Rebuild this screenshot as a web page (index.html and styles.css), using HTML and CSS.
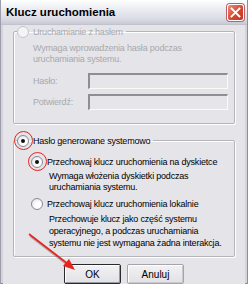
FILE: index.html
```html
<!DOCTYPE html>
<html lang="pl">
<head>
    <meta charset="UTF-8">
    <title>Klucz uruchomienia</title>
    <link rel="stylesheet" href="styles.css">
</head>
<body>
    <div class="window">
        <div class="titlebar">
            <span class="title">Klucz uruchomienia</span>
            <span class="close">
                <svg width="11" height="11" viewBox="0 0 11 11">
                    <path d="M1.5 1.5 L9.5 9.5 M9.5 1.5 L1.5 9.5" stroke="#fff" stroke-width="1.8" stroke-linecap="square"/>
                </svg>
            </span>
        </div>
        <div class="content">
            <fieldset class="group disabled">
                <legend><span class="radio"></span>Uruchamianie z hasłem</legend>
                <p class="desc">Wymaga wprowadzenia hasła podczas<br>uruchamiania systemu.</p>
                <div class="field">
                    <label>Hasło:</label>
                    <span class="input"></span>
                </div>
                <div class="field">
                    <label>Potwierdź:</label>
                    <span class="input"></span>
                </div>
            </fieldset>

            <fieldset class="group">
                <legend><span class="radio checked marked"></span>Hasło generowane systemowo</legend>
                <div class="option"><span class="radio checked marked"></span>Przechowaj klucz uruchomienia na dyskietce</div>
                <p class="desc sub">Wymaga włożenia dyskietki podczas<br>uruchamiania systemu.</p>
                <div class="option second"><span class="radio"></span>Przechowaj klucz uruchomienia lokalnie</div>
                <p class="desc sub long">Przechowuje klucz jako część systemu<br>operacyjnego, a podczas uruchamiania<br>systemu nie jest wymagana żadna interakcja.</p>
            </fieldset>

            <div class="buttons">
                <button class="btn default">OK</button>
                <button class="btn">Anuluj</button>
            </div>
        </div>

        <!-- strzałka wskazująca przycisk OK -->
        <svg class="arrow" width="248" height="284" viewBox="0 0 248 284">
            <line x1="29" y1="234" x2="68" y2="264" stroke="rgba(0,0,0,0.25)" stroke-width="2" transform="translate(1,2)"/>
            <line x1="29" y1="234" x2="68" y2="264" stroke="#e8241c" stroke-width="1.6"/>
            <polygon points="75,270 63,266 69,259" fill="#e8241c"/>
        </svg>
    </div>
</body>
</html>
```

FILE: styles.css
```css
body {
    margin: 0;
    font-family: "Liberation Sans", Arial, sans-serif;
    font-size: 9px;
    letter-spacing: -0.2px;
    color: #000;
}

.window {
    position: relative;
    width: 248px;
    height: 284px;
    box-sizing: border-box;
    display: flex;
    flex-direction: column;
    background: #d3d3dc;
    border-left: 1px solid #9d9dab;
    border-right: 1px solid #8d8d9c;
    border-bottom: 1px solid #8d8d9c;
}

.titlebar {
    height: 25px;
    flex-shrink: 0;
    display: flex;
    align-items: center;
    justify-content: space-between;
    padding: 0 3px 0 5px;
    background: linear-gradient(#ffffff 0%, #eceef3 35%, #dcdde6 75%, #c9cad6 100%);
    border-bottom: 1px solid #c2c2cc;
    box-sizing: border-box;
}

.title {
    font-size: 11.5px;
    font-weight: bold;
    letter-spacing: 0;
    color: #000;
}

.close {
    width: 17px;
    height: 17px;
    box-sizing: border-box;
    display: flex;
    align-items: center;
    justify-content: center;
    border: 1px solid #fff;
    border-radius: 3px;
    background: linear-gradient(135deg, #f08a78, #d9482f 55%, #c0341f);
    box-shadow: 0 0 0 1px #b8606a;
}

.content {
    flex: 1;
    margin: 0 2px 2px 2px;
    padding: 0 10px 0 10px;
    background: #e4e4e9;
    display: flex;
    flex-direction: column;
}

.group {
    margin: 0;
    padding: 0 2px 13px 2px;
    border: 1px solid #b4b4bc;
    border-radius: 2px;
    box-shadow: inset 1px 1px 0 #fff, 1px 1px 0 #fff;
}

.group + .group {
    margin-top: 10px;
    padding-bottom: 7px;
}

.group legend {
    padding: 0 3px 0 0;
    margin-left: 1px;
    display: flex;
    align-items: center;
    height: 13px;
}

.radio {
    position: relative;
    width: 12px;
    height: 12px;
    box-sizing: border-box;
    border: 1px solid #8a8a94;
    border-radius: 50%;
    background: radial-gradient(circle at 65% 65%, #ffffff 30%, #dcdce4 100%);
    margin-right: 4px;
    flex-shrink: 0;
}

.radio.checked::before {
    content: "";
    position: absolute;
    left: 3px;
    top: 3px;
    width: 4px;
    height: 4px;
    border-radius: 50%;
    background: #111;
}

.radio.marked::after {
    content: "";
    position: absolute;
    left: -4.5px;
    top: -4.5px;
    width: 19px;
    height: 19px;
    border: 1.5px solid #e8241c;
    border-radius: 50%;
    box-sizing: border-box;
}

.disabled {
    color: #a9a9ae;
}

.disabled .radio {
    border-color: #c4c4cc;
    background: #f4f4f6;
}

.desc {
    margin: 5px 0 0 17px;
    line-height: 11px;
}

.field {
    display: flex;
    align-items: center;
    margin: 8px 0 0 17px;
}

.field + .field {
    margin-top: 5px;
}

.field label {
    width: 55px;
}

.input {
    width: 140px;
    height: 16px;
    box-sizing: border-box;
    border-top: 2px solid #8e8e94;
    border-left: 2px solid #8e8e94;
    border-right: 1px solid #fbfbf4;
    border-bottom: 1px solid #fbfbf4;
    background: #e6e6ea;
}

.option {
    display: flex;
    align-items: center;
    height: 13px;
    margin: 8px 0 0 15px;
}

.option.second {
    margin-top: 4px;
}

.desc.sub {
    margin: 3px 0 0 33px;
}

.desc.long {
    line-height: 12px;
}

.buttons {
    display: flex;
    justify-content: center;
    gap: 6px;
    margin-top: 7px;
}

.btn {
    width: 57px;
    height: 20px;
    padding: 0;
    font-family: "Liberation Sans", Arial, sans-serif;
    font-size: 10px;
    color: #000;
    background: linear-gradient(#f2f2f4, #e2e2e6);
    border: 1px solid #a4a4ac;
    border-radius: 2px;
    box-shadow: inset 1px 1px 0 #fff, inset -1px -1px 0 #c8c8ce;
}

.btn.default {
    border: 1px solid #2a2a2a;
    box-shadow: inset 1px 1px 0 #fff, inset -1px -1px 0 #9a9aa2;
}

.arrow {
    position: absolute;
    left: -1px;
    top: 0;
    pointer-events: none;
}
```
